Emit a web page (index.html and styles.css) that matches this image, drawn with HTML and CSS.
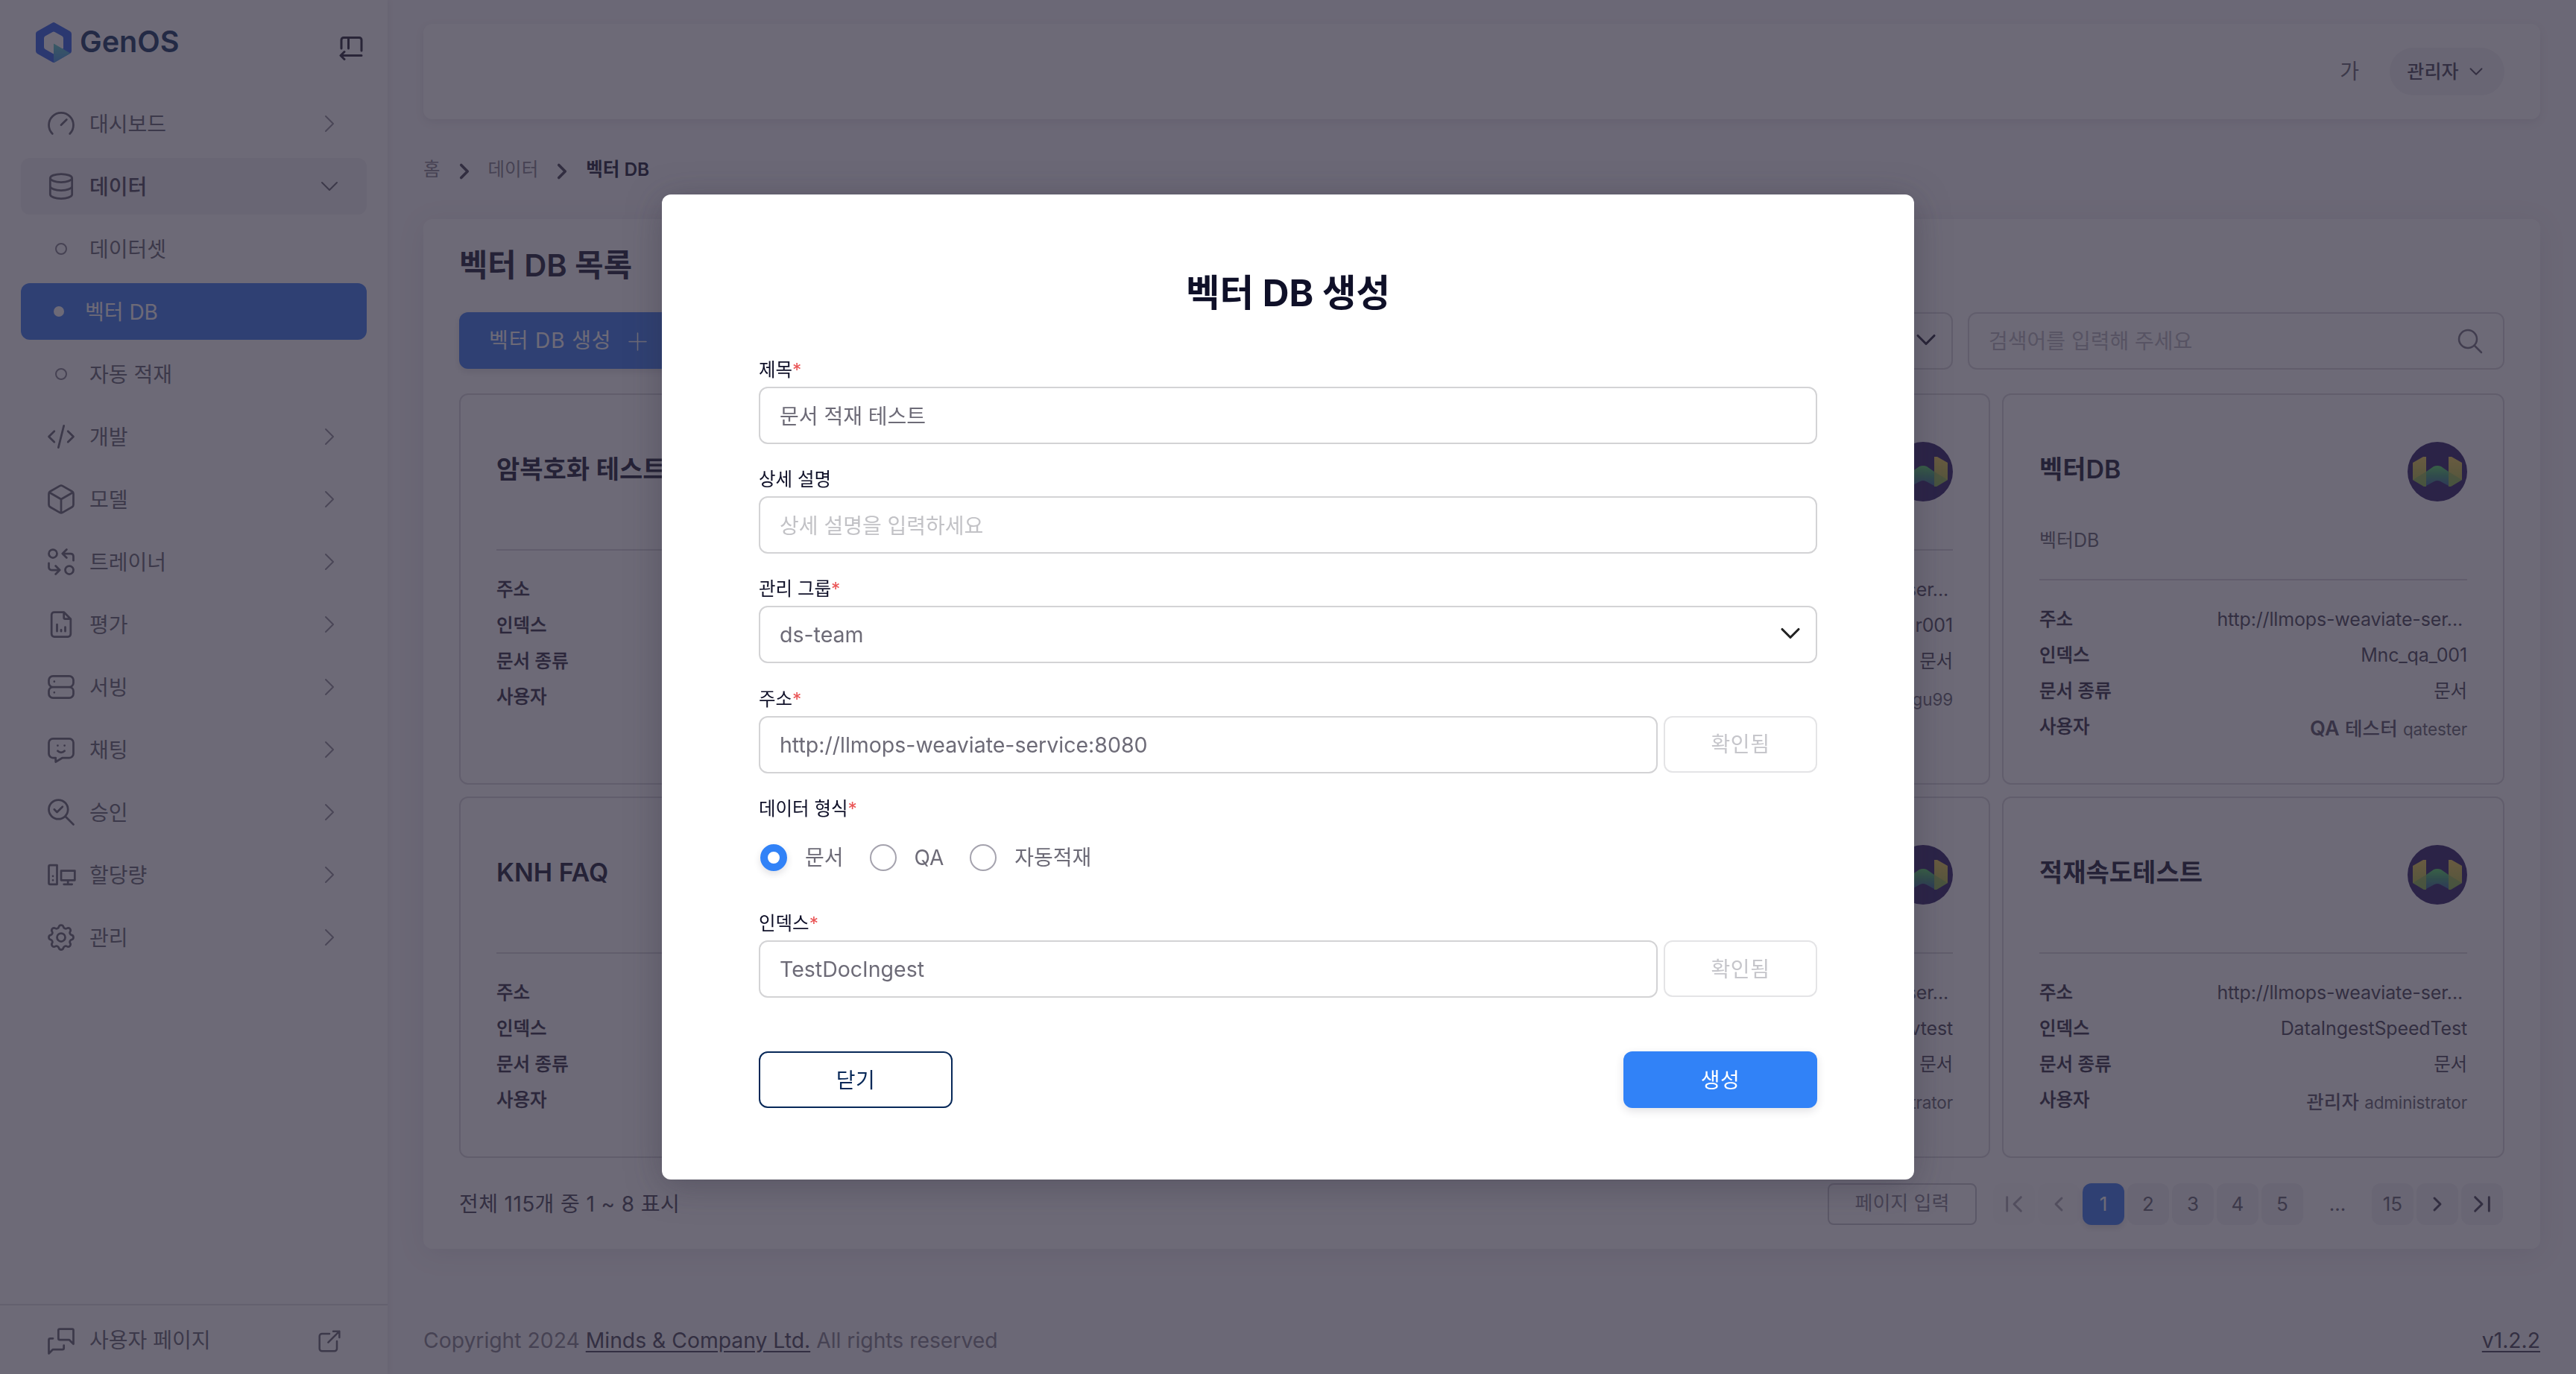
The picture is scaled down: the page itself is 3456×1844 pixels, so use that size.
FILE: index.html
```html
<!DOCTYPE html>
<html lang="ko">
<head>
    <meta charset="UTF-8">
    <meta name="viewport" content="width=device-width, initial-scale=1.0">
    <title>GenOS - 벡터 DB</title>
    <link rel="stylesheet" href="styles.css">
</head>
<body>
    <!-- 공통 아이콘 -->
    <svg class="sprite" width="0" height="0">
        <symbol id="i-right" viewBox="0 0 24 24"><path d="M9 6l6 6l-6 6"/></symbol>
        <symbol id="i-left" viewBox="0 0 24 24"><path d="M15 6l-6 6l6 6"/></symbol>
        <symbol id="i-down" viewBox="0 0 24 24"><path d="M6 9l6 6l6 -6"/></symbol>
        <symbol id="i-weaviate" viewBox="0 0 80 80">
            <circle cx="40" cy="40" r="40" fill="#22125f"/>
            <path d="M7 28L21 20H25V60H22L7 51Z" fill="url(#gYellow)"/>
            <path d="M73 28L59 20H55V60H58L73 51Z" fill="url(#gYellow)"/>
            <path d="M25 40L35 33Q40 31 45 33L55 40V59L44 53Q40 51 36 53L25 59Z" fill="url(#gGreen)"/>
            <path d="M7 51L25 40V60H22Z M73 51L55 40V60H58Z" fill="#5fae4a" opacity=".5"/>
        </symbol>
        <defs>
            <linearGradient id="gYellow" x1="0" y1="0" x2="0" y2="1">
                <stop offset="0" stop-color="#f0cc48"/>
                <stop offset="1" stop-color="#a3b83a"/>
            </linearGradient>
            <linearGradient id="gGreen" x1="0" y1="0" x2="0" y2="1">
                <stop offset="0" stop-color="#4fdc5c"/>
                <stop offset=".5" stop-color="#359a70"/>
                <stop offset="1" stop-color="#2d5f98"/>
            </linearGradient>
        </defs>
    </svg>

    <div class="layout">
        <aside class="sidebar">
            <div class="brand">
                <svg class="logo" viewBox="0 0 48 54">
                    <defs>
                        <linearGradient id="gTeal" x1="0" y1="0" x2="0" y2="1">
                            <stop offset="0" stop-color="#52c8c0"/>
                            <stop offset="1" stop-color="#3a8ee0"/>
                        </linearGradient>
                    </defs>
                    <path fill="#2458e8" fill-rule="evenodd" d="M22 .7a4 4 0 0 1 4 0L46 12a4 4 0 0 1 2 3.400v23a4 4 0 0 1-2 3.400L26 53.300a4 4 0 0 1-4 0L2 42a4 4 0 0 1-2-3.400v-23A4 4 0 0 1 2 12ZM22.500 13L12.500 18.500Q11 19.500 11 21.500V33Q11 35 12.500 36L24 42.500L37 35V21.500Q37 19.500 35.500 18.500L25.500 13Q24 12.200 22.500 13Z"/>
                    <path fill="url(#gTeal)" d="M24 28.500L46.500 41.500L26 53.300L24 54Z"/>
                </svg>
                <span class="brand-name">GenOS</span>
                <svg class="collapse" viewBox="0 0 32 32"><path d="M3 16V4.500a3 3 0 0 1 3-3H27a3 3 0 0 1 3 3V19M12.500 2V16M30 25.500H3M7 20.500L2 25.500L7 30.500"/></svg>
            </div>

            <nav class="menu">
                <a class="item">
                    <svg class="icon" viewBox="0 0 24 24"><path d="M5.636 19.364a9 9 0 1 1 12.728 0M16 9l-4 4"/></svg>
                    <span>대시보드</span><svg class="arrow"><use href="#i-right"/></svg>
                </a>
                <a class="item open">
                    <svg class="icon" viewBox="0 0 24 24"><path d="M4 6a8 3 0 1 0 16 0a8 3 0 1 0 -16 0M4 6v6a8 3 0 0 0 16 0v-6M4 12v6a8 3 0 0 0 16 0v-6"/></svg>
                    <span>데이터</span><svg class="arrow"><use href="#i-down"/></svg>
                </a>
                <a class="item sub"><i class="dot"></i><span>데이터셋</span></a>
                <a class="item sub active"><i class="dot"></i><span>벡터 DB</span></a>
                <a class="item sub"><i class="dot"></i><span>자동 적재</span></a>
                <a class="item">
                    <svg class="icon" viewBox="0 0 24 24"><path d="M7 8l-4 4l4 4M17 8l4 4l-4 4M14 4l-4 16"/></svg>
                    <span>개발</span><svg class="arrow"><use href="#i-right"/></svg>
                </a>
                <a class="item">
                    <svg class="icon" viewBox="0 0 24 24"><path d="M21 16.008v-8.018a1.980 1.980 0 0 0 -1 -1.717l-7 -4.008a2.016 2.016 0 0 0 -2 0l-7 4.008c-.619 .355 -1 1.010 -1 1.718v8.018c0 .709 .381 1.363 1 1.717l7 4.008a2.016 2.016 0 0 0 2 0l7 -4.008c.619 -.355 1 -1.010 1 -1.718zM12 22v-10M12 12l8.730 -5.040M3.270 6.960l8.730 5.040"/></svg>
                    <span>모델</span><svg class="arrow"><use href="#i-right"/></svg>
                </a>
                <a class="item">
                    <svg class="icon" viewBox="0 0 24 24"><path d="M3 6a3 3 0 1 0 6 0a3 3 0 0 0 -6 0M21 11v-3a2 2 0 0 0 -2 -2h-6l3 3m0 -6l-3 3M3 13v3a2 2 0 0 0 2 2h6l-3 -3m0 6l3 -3M15 18a3 3 0 1 0 6 0a3 3 0 0 0 -6 0"/></svg>
                    <span>트레이너</span><svg class="arrow"><use href="#i-right"/></svg>
                </a>
                <a class="item">
                    <svg class="icon" viewBox="0 0 24 24"><path d="M14 3v4a1 1 0 0 0 1 1h4M17 21h-10a2 2 0 0 1 -2 -2v-14a2 2 0 0 1 2 -2h7l5 5v11a2 2 0 0 1 -2 2zM9 17v-5M12 17v-1M15 17v-3"/></svg>
                    <span>평가</span><svg class="arrow"><use href="#i-right"/></svg>
                </a>
                <a class="item">
                    <svg class="icon" viewBox="0 0 24 24"><path d="M3 7a3 3 0 0 1 3 -3h12a3 3 0 0 1 3 3v2a3 3 0 0 1 -3 3h-12a3 3 0 0 1 -3 -3zM3 15a3 3 0 0 1 3 -3h12a3 3 0 0 1 3 3v2a3 3 0 0 1 -3 3h-12a3 3 0 0 1 -3 -3zM7 8v.01M7 16v.01"/></svg>
                    <span>서빙</span><svg class="arrow"><use href="#i-right"/></svg>
                </a>
                <a class="item">
                    <svg class="icon" viewBox="0 0 24 24"><path d="M18 4a3 3 0 0 1 3 3v8a3 3 0 0 1 -3 3h-5l-5 3v-3h-2a3 3 0 0 1 -3 -3v-8a3 3 0 0 1 3 -3zM9.500 9h.01M14.500 9h.01M9.500 13a3.500 3.500 0 0 0 5 0"/></svg>
                    <span>채팅</span><svg class="arrow"><use href="#i-right"/></svg>
                </a>
                <a class="item">
                    <svg class="icon" viewBox="0 0 24 24"><path d="M3 10a7 7 0 1 0 14 0a7 7 0 1 0 -14 0M21 21l-6 -6M7 10l2 2l4 -4"/></svg>
                    <span>승인</span><svg class="arrow"><use href="#i-right"/></svg>
                </a>
                <a class="item">
                    <svg class="icon" viewBox="0 0 24 24"><path d="M9 5v14h-5a1 1 0 0 1 -1 -1v-12a1 1 0 0 1 1 -1zM12 9h10v7h-10zM14 19h6M17 16v3M6 13v.01M6 16v.01"/></svg>
                    <span>할당량</span><svg class="arrow"><use href="#i-right"/></svg>
                </a>
                <a class="item">
                    <svg class="icon" viewBox="0 0 24 24"><path d="M10.325 4.317c.426 -1.756 2.924 -1.756 3.350 0a1.724 1.724 0 0 0 2.573 1.066c1.543 -.94 3.310 .826 2.370 2.370a1.724 1.724 0 0 0 1.065 2.572c1.756 .426 1.756 2.924 0 3.350a1.724 1.724 0 0 0 -1.066 2.573c.94 1.543 -.826 3.310 -2.370 2.370a1.724 1.724 0 0 0 -2.572 1.065c-.426 1.756 -2.924 1.756 -3.350 0a1.724 1.724 0 0 0 -2.573 -1.066c-1.543 .94 -3.310 -.826 -2.370 -2.370a1.724 1.724 0 0 0 -1.065 -2.572c-1.756 -.426 -1.756 -2.924 0 -3.350a1.724 1.724 0 0 0 1.066 -2.573c-.94 -1.543 .826 -3.310 2.370 -2.370c1 .608 2.296 .07 2.572 -1.065zM9 12a3 3 0 1 0 6 0a3 3 0 0 0 -6 0"/></svg>
                    <span>관리</span><svg class="arrow"><use href="#i-right"/></svg>
                </a>
            </nav>

            <a class="user-page">
                <svg class="icon" viewBox="0 0 24 24"><path d="M21 14l-3 -3h-7a1 1 0 0 1 -1 -1v-6a1 1 0 0 1 1 -1h9a1 1 0 0 1 1 1v10M14 15v2a1 1 0 0 1 -1 1h-7l-3 3v-10a1 1 0 0 1 1 -1h2"/></svg>
                <span>사용자 페이지</span>
                <svg class="external" viewBox="0 0 24 24"><path d="M12 6h-6a2 2 0 0 0 -2 2v10a2 2 0 0 0 2 2h10a2 2 0 0 0 2 -2v-6M11 13l9 -9M15 4h5v5"/></svg>
            </a>
        </aside>

        <div class="page">
            <header class="topbar">
                <span class="font-size">가</span>
                <button class="admin">관리자<svg><use href="#i-down"/></svg></button>
            </header>

            <div class="breadcrumb">
                <span>홈</span><svg><use href="#i-right"/></svg>
                <span>데이터</span><svg><use href="#i-right"/></svg>
                <b>벡터 DB</b>
            </div>

            <main class="panel">
                <h1>벡터 DB 목록</h1>
                <div class="toolbar">
                    <button class="create">벡터 DB 생성<svg viewBox="0 0 24 24"><path d="M12 1v22M1 12h22"/></svg></button>
                    <div class="filter"><svg><use href="#i-down"/></svg></div>
                    <div class="search">
                        <span>검색어를 입력해 주세요</span>
                        <svg viewBox="0 0 34 34"><circle cx="14" cy="14" r="12"/><path d="M23 23l9 9"/></svg>
                    </div>
                </div>

                <div class="cards">
                    <section class="card">
                        <div class="card-head"><h2>암복호화 테스트</h2></div>
                        <dl>
                            <dt>주소</dt><dd></dd>
                            <dt>인덱스</dt><dd></dd>
                            <dt>문서 종류</dt><dd></dd>
                            <dt>사용자</dt><dd></dd>
                        </dl>
                    </section>
                    <section class="card"></section>
                    <section class="card">
                        <div class="card-head"><h2></h2><svg class="avatar"><use href="#i-weaviate"/></svg></div>
                        <dl>
                            <dt>주소</dt><dd class="url">http://llmops-weaviate-ser...</dd>
                            <dt>인덱스</dt><dd>r001</dd>
                            <dt>문서 종류</dt><dd class="kind">문서</dd>
                            <dt>사용자</dt><dd class="user"><small>gu99</small></dd>
                        </dl>
                    </section>
                    <section class="card">
                        <div class="card-head"><h2>벡터DB</h2><svg class="avatar"><use href="#i-weaviate"/></svg></div>
                        <p class="desc">벡터DB</p>
                        <dl>
                            <dt>주소</dt><dd class="url">http://llmops-weaviate-ser...</dd>
                            <dt>인덱스</dt><dd>Mnc_qa_001</dd>
                            <dt>문서 종류</dt><dd class="kind">문서</dd>
                            <dt>사용자</dt><dd class="user"><b><strong>QA</strong> 테스터</b> <small>qatester</small></dd>
                        </dl>
                    </section>
                    <section class="card">
                        <div class="card-head"><h2>KNH FAQ</h2></div>
                        <dl>
                            <dt>주소</dt><dd></dd>
                            <dt>인덱스</dt><dd></dd>
                            <dt>문서 종류</dt><dd></dd>
                            <dt>사용자</dt><dd></dd>
                        </dl>
                    </section>
                    <section class="card"></section>
                    <section class="card">
                        <div class="card-head"><h2></h2><svg class="avatar"><use href="#i-weaviate"/></svg></div>
                        <dl>
                            <dt>주소</dt><dd class="url">http://llmops-weaviate-ser...</dd>
                            <dt>인덱스</dt><dd>vtest</dd>
                            <dt>문서 종류</dt><dd class="kind">문서</dd>
                            <dt>사용자</dt><dd class="user"><small>administrator</small></dd>
                        </dl>
                    </section>
                    <section class="card">
                        <div class="card-head"><h2>적재속도테스트</h2><svg class="avatar"><use href="#i-weaviate"/></svg></div>
                        <dl>
                            <dt>주소</dt><dd class="url">http://llmops-weaviate-ser...</dd>
                            <dt>인덱스</dt><dd>DataIngestSpeedTest</dd>
                            <dt>문서 종류</dt><dd class="kind">문서</dd>
                            <dt>사용자</dt><dd class="user"><b>관리자</b> <small>administrator</small></dd>
                        </dl>
                    </section>
                </div>

                <div class="paging">
                    <span class="count">전체 115개 중 1 ~ 8 표시</span>
                    <div class="page-input">페이지 입력</div>
                    <div class="pages">
                        <a class="off"><svg viewBox="0 0 24 24"><path d="M19 5l-7 7l7 7M5 5v14"/></svg></a>
                        <a class="off"><svg><use href="#i-left"/></svg></a>
                        <a class="on">1</a>
                        <a>2</a>
                        <a>3</a>
                        <a>4</a>
                        <a>5</a>
                        <span>...</span>
                        <a>15</a>
                        <a class="dark"><svg><use href="#i-right"/></svg></a>
                        <a class="dark"><svg viewBox="0 0 24 24"><path d="M5 5l7 7l-7 7M19 5v14"/></svg></a>
                    </div>
                </div>
            </main>

            <footer class="footer">
                <span>Copyright 2024 <u>Minds &amp; Company Ltd.</u> All rights reserved</span>
                <u>v1.2.2</u>
            </footer>
        </div>
    </div>

    <!-- 벡터 DB 생성 모달 -->
    <div class="overlay">
        <form class="modal">
            <h2 class="modal-title">벡터 DB 생성</h2>

            <div class="field">
                <label>제목<em>*</em></label>
                <div class="input">문서 적재 테스트</div>
            </div>
            <div class="field">
                <label>상세 설명</label>
                <div class="input empty">상세 설명을 입력하세요</div>
            </div>
            <div class="field">
                <label>관리 그룹<em>*</em></label>
                <div class="input select en">ds-team<svg><use href="#i-down"/></svg></div>
            </div>
            <div class="field">
                <label>주소<em>*</em></label>
                <div class="row">
                    <div class="input en">http://llmops-weaviate-service:8080</div>
                    <button type="button" class="checked" disabled>확인됨</button>
                </div>
            </div>
            <div class="field type">
                <label>데이터 형식<em>*</em></label>
                <div class="radios">
                    <i class="radio on"></i><span>문서</span>
                    <i class="radio"></i><span>QA</span>
                    <i class="radio"></i><span>자동적재</span>
                </div>
            </div>
            <div class="field">
                <label>인덱스<em>*</em></label>
                <div class="row">
                    <div class="input en">TestDocIngest</div>
                    <button type="button" class="checked" disabled>확인됨</button>
                </div>
            </div>

            <div class="actions">
                <button type="button" class="close">닫기</button>
                <button type="button" class="submit">생성</button>
            </div>
        </form>
    </div>
</body>
</html>
```
FILE: styles.css
```css
* {
    box-sizing: border-box;
}

body {
    margin: 0;
    height: 1844px;
    overflow: hidden;
    background-color: #f8f7fa;
    color: #5d5a68;
    font-family: Inter, "Noto Sans CJK KR", sans-serif;
    font-size: 28px;
    line-height: 1.4;
}

h1, h2, p, dl, dd {
    margin: 0;
}

button {
    font: inherit;
    letter-spacing: .6px;
    border: 0;
    padding: 3px 0 0;
}

svg {
    fill: none;
    stroke: currentColor;
    stroke-width: 1.5;
    stroke-linecap: round;
    stroke-linejoin: round;
    flex-shrink: 0;
}

.sprite {
    position: absolute;
}

.layout {
    display: flex;
    height: 1844px;
}

/* sidebar */
.sidebar {
    display: flex;
    flex-direction: column;
    width: 520px;
    background-color: white;
    box-shadow: 0 0 8px rgba(47, 43, 61, .1);
}

.brand {
    display: flex;
    height: 128px;
    padding: 30px 33px 0 48px;
}

.logo {
    width: 48px;
    height: 54px;
    stroke: none;
}

.brand-name {
    margin-left: 11px;
    line-height: 52px;
    font-size: 39.600px;
    font-weight: 600;
    color: #072858;
}

.collapse {
    width: 32px;
    height: 32px;
    margin: 19px 0 0 auto;
    stroke-width: 3;
    color: #1d1a2c;
}

.menu {
    display: flex;
    flex-direction: column;
    gap: 8px;
    padding: 0 28px;
    flex: 1;
}

.item {
    display: flex;
    align-items: center;
    height: 76px;
    padding: 0 28px 0 32px;
    border-radius: 12px;
}

.item span {
    padding-top: 4px;
}

.icon {
    width: 44px;
    height: 44px;
    margin-right: 16px;
}

.arrow {
    width: 44px;
    height: 40px;
    margin-left: auto;
    stroke-width: 1.2;
    color: #8b8894;
}

.open {
    background-color: #f1f0f3;
    font-weight: 500;
    color: #3f3b4d;
}

.open .icon {
    color: #5d5a68;
}

.open .arrow {
    color: #5d5a68;
}

.dot {
    width: 16px;
    height: 16px;
    margin: 0 30px 0 14px;
    border: 2px solid #7d7a87;
    border-radius: 50%;
}

.active {
    background-color: #3174f0;
    color: white;
}

.active .dot {
    width: 14px;
    height: 14px;
    margin: 0 28px 0 12px;
    border: 0;
    background-color: white;
}

.user-page {
    display: flex;
    align-items: center;
    height: 94px;
    padding: 4px 58px 0 60px;
    border-top: 2px solid #dddce1;
}

.external {
    width: 40px;
    height: 40px;
    margin-left: auto;
}

/* page */
.page {
    flex: 1;
    padding: 32px 48px 0;
}

.topbar {
    display: flex;
    align-items: center;
    justify-content: flex-end;
    height: 128px;
    padding-right: 48px;
    border-radius: 12px;
    background-color: white;
    box-shadow: 0 4px 12px rgba(47, 43, 61, .1);
}

.font-size {
    margin-right: 41px;
    padding-top: 2px;
    font-size: 28px;
}

.admin {
    display: flex;
    align-items: center;
    justify-content: center;
    gap: 8px;
    width: 154px;
    height: 64px;
    padding: 0;
    border-radius: 32px;
    background-color: #f1f0f3;
    color: #3f3b4d;
    font-size: 25px;
    font-weight: 500;
    letter-spacing: .2px;
}

.admin svg {
    width: 30px;
    height: 30px;
}

.breadcrumb {
    display: flex;
    align-items: center;
    height: 134px;
    font-size: 24.500px;
    color: #7d7a87;
}

.breadcrumb svg {
    width: 34px;
    height: 34px;
    margin: 6px 15px 0;
    stroke-width: 2.600;
    color: #3a364a;
}

.breadcrumb b {
    color: #0f1028;
    font-weight: 600;
}

.panel {
    height: 1382px;
    padding: 0 48px;
    border-radius: 12px;
    background-color: white;
    box-shadow: 0 6px 36px rgba(47, 43, 61, .1);
}

.panel h1 {
    height: 125px;
    line-height: 124px;
    font-size: 41.700px;
    font-weight: 600;
    color: #0f1028;
}

.toolbar {
    display: flex;
    justify-content: space-between;
}

.create {
    display: flex;
    align-items: center;
    gap: 22px;
    height: 76px;
    padding: 2px 40px 0;
    border-radius: 12px;
    background-color: #3174f0;
    box-shadow: 0 4px 10px rgba(47, 43, 61, .15);
    color: white;
    letter-spacing: .9px;
}

.create svg {
    width: 25px;
    height: 25px;
}

.filter, .search {
    display: flex;
    align-items: center;
    height: 77px;
    border: 2px solid #d5d4d9;
    border-radius: 12px;
}

.filter {
    justify-content: flex-end;
    width: 400px;
    margin-left: auto;
    padding-right: 12px;
    color: #17152a;
}

.filter svg, .select svg {
    width: 44px;
    height: 44px;
    margin-top: -4px;
    stroke-width: 1.7;
}

.search {
    justify-content: space-between;
    width: 720px;
    margin-left: 20px;
    padding: 0 27px 0 26px;
    color: #b5b3bb;
}

.search span {
    padding-top: 3px;
}

.search svg {
    width: 34px;
    height: 34px;
    stroke-width: 2.500;
    color: #6d6a78;
}

.cards {
    display: grid;
    grid-template-columns: repeat(4, 1fr);
    grid-template-rows: 525px 485px;
    gap: 16px;
    padding-top: 32px;
}

.card {
    padding: 63px 48px 0;
    border: 2px solid #d5d4d9;
    border-radius: 12px;
}

.card-head {
    display: flex;
    justify-content: space-between;
    height: 80px;
}

.card-head h2 {
    line-height: 73px;
    font-size: 34px;
    font-weight: 600;
    color: #0f1028;
}

.avatar {
    width: 80px;
    height: 80px;
    stroke: none;
}

.desc {
    margin-top: 31px;
    height: 40px;
    line-height: 43px;
    font-size: 25px;
    margin-bottom: -31px;
}

.card dl {
    display: grid;
    grid-template-columns: auto 1fr;
    grid-auto-rows: 48px;
    margin-top: 64px;
    padding-top: 28px;
    border-top: 2px solid #d5d4d9;
    font-size: 24.500px;
    line-height: 48px;
}

.card dt {
    font-weight: 500;
    color: #252138;
    -webkit-text-stroke: .3px currentColor;
}

.card dd {
    text-align: right;
    font-size: 25px;
    letter-spacing: -.15px;
    color: #3f3b4d;
}

.card .url {
    padding-right: 6px;
}

.card .kind {
    font-size: 24.500px;
}

.card .user {
    padding-top: 3px;
    font-size: 25.500px;
    color: #5d5a68;
}

.card .user b {
    font-weight: 500;
    letter-spacing: .2px;
    color: #4d495b;
}

.card .user strong {
    font-size: 27px;
    font-weight: 600;
}

.card .user small {
    font-size: 22.500px;
}

.paging {
    display: flex;
    align-items: center;
    padding: 34px 2px 0 0;
}

.count {
    margin-right: auto;
    padding-top: 2px;
    letter-spacing: .4px;
    color: #3f3b4d;
}

.page-input {
    width: 200px;
    height: 56px;
    margin-right: 22px;
    border: 2px solid #c4c3c9;
    border-radius: 8px;
    line-height: 50px;
    text-align: center;
    font-size: 26px;
    color: #7d7a87;
}

.pages {
    display: flex;
    gap: 4px;
    text-align: center;
    line-height: 56px;
    font-size: 26px;
}

.pages a {
    display: flex;
    align-items: center;
    justify-content: center;
    width: 56px;
    height: 56px;
    border-radius: 12px;
    background-color: #f1f0f3;
}

.pages span {
    width: 84px;
}

.pages svg {
    width: 32px;
    height: 32px;
    stroke-width: 2.200;
}

.pages .off {
    background-color: #fbfafc;
    color: #a3a1aa;
}

.pages .on {
    background-color: #3174f0;
    color: white;
    box-shadow: 0 4px 8px rgba(47, 43, 61, .15);
}

.pages .dark {
    color: #3a364a;
}

.footer {
    display: flex;
    justify-content: space-between;
    padding-top: 104px;
    font-size: 28.300px;
    color: #7d7a87;
}

.footer u {
    color: #3f3b4d;
    text-underline-offset: 4px;
}

/* modal */
.overlay {
    position: fixed;
    inset: 0;
    display: flex;
    align-items: center;
    justify-content: center;
    background-color: rgba(47, 43, 61, .7);
}

.modal {
    width: 1680px;
    height: 1322px;
    padding: 88px 130px 0;
    border-radius: 12px;
    background-color: white;
    box-shadow: 0 8px 48px rgba(47, 43, 61, .35);
    color: #6d6b77;
}

.modal-title {
    height: 130px;
    line-height: 88px;
    text-align: center;
    font-size: 49.500px;
    font-weight: 700;
    color: #0f1028;
}

.field {
    height: 147.200px;
}

.field.type {
    height: 154.200px;
}

.field label {
    display: block;
    height: 40px;
    line-height: 34px;
    font-size: 24.500px;
    color: #0f1028;
}

.field em {
    font-style: normal;
    color: #ea5455;
}

.input {
    display: flex;
    align-items: center;
    flex: 1;
    height: 77px;
    padding: 4px 26px 0;
    border: 2px solid #d3d3d5;
    border-radius: 12px;
}

.en {
    padding-top: 1px;
    font-size: 28.500px;
}

.empty {
    color: #c2c2c6;
}

.select {
    justify-content: space-between;
    padding-right: 12px;
}

.select svg {
    color: #222;
}

.row {
    display: flex;
    gap: 8px;
}

.checked {
    width: 206px;
    height: 76px;
    border: 2px solid #e4e4e6;
    border-radius: 12px;
    background-color: white;
    color: #c6c6cb;
}

.radios {
    display: flex;
    align-items: center;
    height: 99px;
    padding: 0 0 13px 2px;
}

.radio {
    width: 36px;
    height: 36px;
    margin-right: 24px;
    border: 2px solid #a5a3ae;
    border-radius: 50%;
}

.radio.on {
    border: 10px solid #3182f7;
    box-shadow: 0 4px 10px rgba(47, 43, 61, .15);
}

.radios span {
    margin-right: 35px;
    padding-top: 2px;
}

.actions {
    display: flex;
    justify-content: space-between;
    margin-top: 42px;
}

.actions button {
    width: 260px;
    height: 76px;
    border-radius: 12px;
}

.close {
    border: 2px solid #072858;
    background-color: white;
    color: #072858;
}

.submit {
    background-color: #3182f7;
    color: white;
    box-shadow: 0 4px 12px rgba(47, 43, 61, .14);
}
```
